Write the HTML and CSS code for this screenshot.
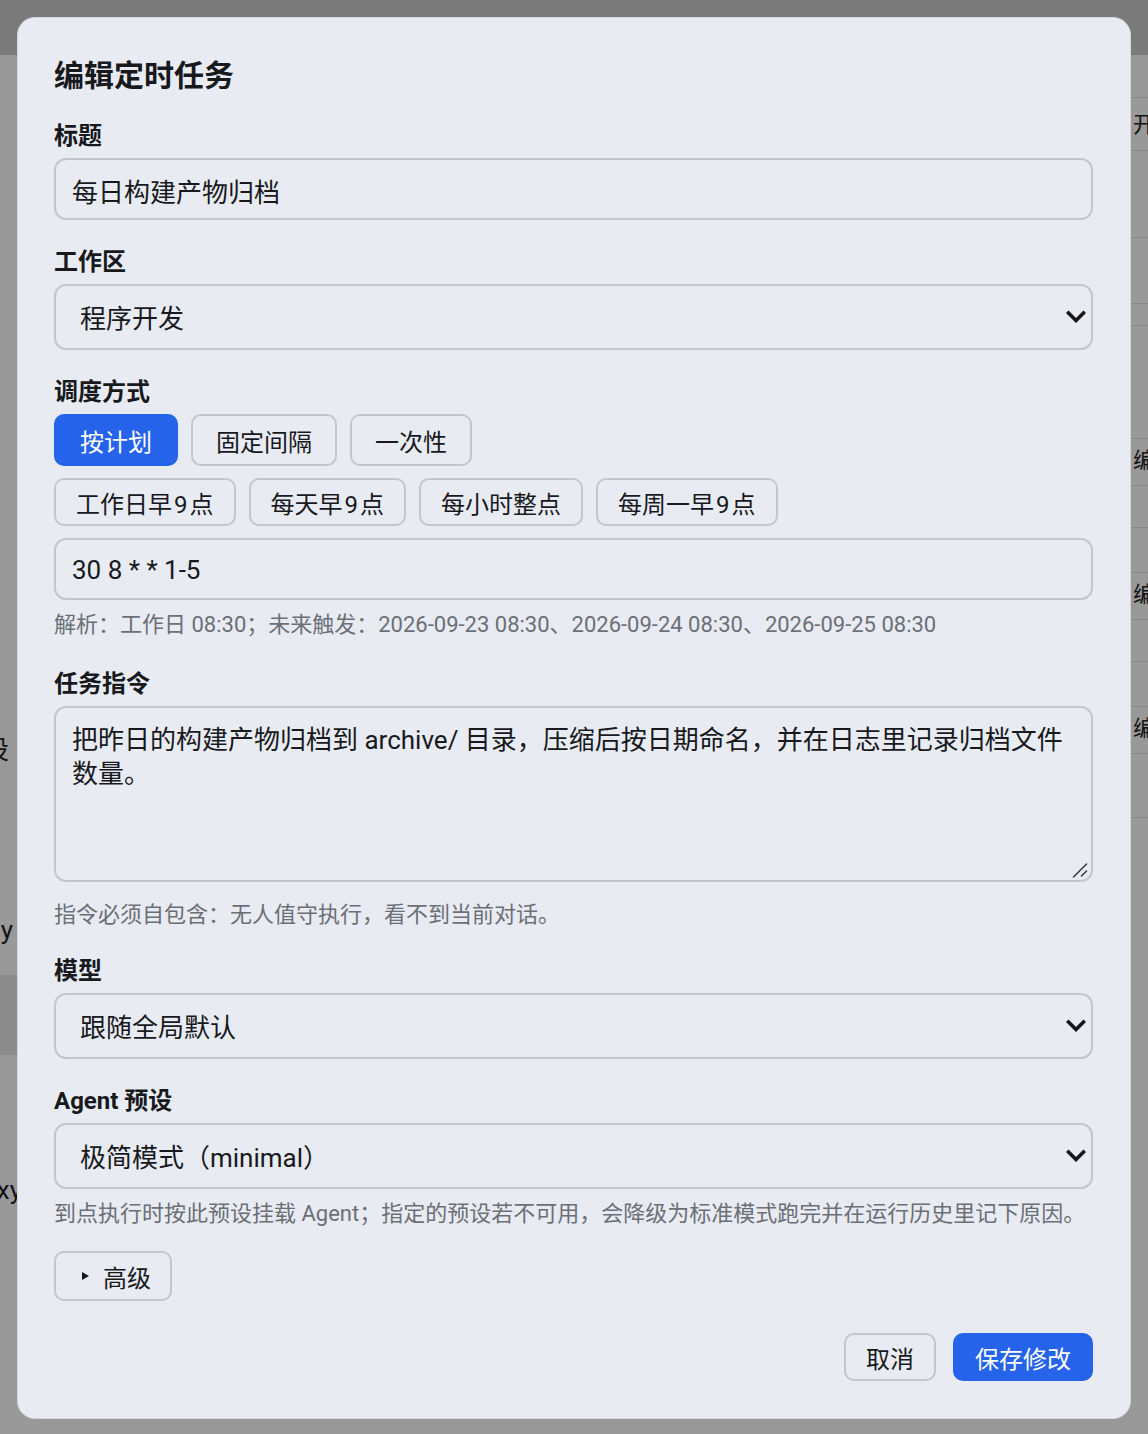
FILE: index.html
```html
<!DOCTYPE html>
<html lang="zh-CN">
<head>
<meta charset="utf-8">
<title>编辑定时任务</title>
<link rel="stylesheet" href="styles.css">
</head>
<body>
<div class="app">
  <header class="topbar"></header>
  <div class="workspace">
    <aside class="sidebar">
      <div class="side-item side-item-preset">Agent 预设</div>
      <div class="side-item side-item-key">Key y</div>
      <div class="side-item side-item-active"></div>
      <div class="side-item side-item-proxy">Proxy (</div>
    </aside>
    <main class="main"></main>
    <section class="tasks">
      <div class="task-row row-head">开启</div>
      <div class="task-row row-gap-lg"></div>
      <div class="task-row row-mid"></div>
      <div class="task-row row-thin"></div>
      <div class="task-row row-gap-xl"></div>
      <div class="task-row row-item">编辑</div>
      <div class="task-row row-sub"></div>
      <div class="task-row row-sep"></div>
      <div class="task-row row-item">编辑</div>
      <div class="task-row row-sub"></div>
      <div class="task-row row-sep"></div>
      <div class="task-row row-item">编辑</div>
      <div class="task-row row-tail"></div>
      <div class="task-row row-thin"></div>
    </section>
  </div>
</div>

<div class="backdrop"></div>

<div class="dialog" role="dialog" aria-labelledby="dlg-title">
  <h2 class="dialog-title" id="dlg-title">编辑定时任务</h2>

  <div class="field">
    <label class="field-label" for="f-title">标题</label>
    <input class="text-input" id="f-title" type="text" value="每日构建产物归档">
  </div>

  <div class="field">
    <label class="field-label" for="f-ws">工作区</label>
    <div class="select-wrap">
      <select class="select" id="f-ws">
        <option>程序开发</option>
      </select>
      <svg class="chevron" width="20" height="14" viewBox="0 0 20 14"><path d="M2.5 3 L10 10.5 L17.5 3" fill="none" stroke="#15171b" stroke-width="3.6" stroke-linecap="square"/></svg>
    </div>
  </div>

  <div class="field">
    <span class="field-label">调度方式</span>
    <div class="seg-row">
      <button class="seg seg-active" type="button">按计划</button>
      <button class="seg" type="button">固定间隔</button>
      <button class="seg" type="button">一次性</button>
    </div>
    <div class="chip-row">
      <button class="chip" type="button">工作日早<span class="num">9</span>点</button>
      <button class="chip" type="button">每天早<span class="num">9</span>点</button>
      <button class="chip" type="button">每小时整点</button>
      <button class="chip" type="button">每周一早<span class="num">9</span>点</button>
    </div>
    <input class="text-input cron-input" type="text" value="30 8 * * 1-5">
    <p class="hint">解析：工作日 08:30；未来触发：2026-09-23 08:30、2026-09-24 08:30、2026-09-25 08:30</p>
  </div>

  <div class="field field-after-hint">
    <label class="field-label" for="f-prompt">任务指令</label>
    <div class="textarea-wrap">
      <textarea class="textarea" id="f-prompt">把昨日的构建产物归档到 archive/ 目录，压缩后按日期命名，并在日志里记录归档文件数量。</textarea>
      <svg class="grip" width="16" height="16" viewBox="0 0 16 16"><path d="M1.5 15 L14.5 2 M9.5 14 L14.5 9" fill="none" stroke="#3c3f45" stroke-width="1.6" stroke-linecap="round"/></svg>
    </div>
    <p class="hint hint-loose">指令必须自包含：无人值守执行，看不到当前对话。</p>
  </div>

  <div class="field">
    <label class="field-label" for="f-model">模型</label>
    <div class="select-wrap">
      <select class="select" id="f-model">
        <option>跟随全局默认</option>
      </select>
      <svg class="chevron" width="20" height="14" viewBox="0 0 20 14"><path d="M2.5 3 L10 10.5 L17.5 3" fill="none" stroke="#15171b" stroke-width="3.6" stroke-linecap="square"/></svg>
    </div>
  </div>

  <div class="field">
    <label class="field-label" for="f-agent">Agent 预设</label>
    <div class="select-wrap">
      <select class="select" id="f-agent">
        <option>极简模式（minimal）</option>
      </select>
      <svg class="chevron" width="20" height="14" viewBox="0 0 20 14"><path d="M2.5 3 L10 10.5 L17.5 3" fill="none" stroke="#15171b" stroke-width="3.6" stroke-linecap="square"/></svg>
    </div>
    <p class="hint">到点执行时按此预设挂载 Agent；指定的预设若不可用，会降级为标准模式跑完并在运行历史里记下原因。</p>
  </div>

  <button class="advanced" type="button">
    <svg class="caret" width="7" height="8" viewBox="0 0 7 8"><path d="M0 0 L7 4 L0 8 Z" fill="#15171b"/></svg>
    <span>高级</span>
  </button>

  <div class="dialog-actions">
    <button class="btn" type="button">取消</button>
    <button class="btn btn-primary" type="button">保存修改</button>
  </div>
</div>
</body>
</html>
```

FILE: styles.css
```css
* {
  box-sizing: border-box;
}

html,
body {
  margin: 0;
  width: 1148px;
  height: 1434px;
  overflow: hidden;
}

body {
  font-family: Roboto, "Noto Sans CJK SC", sans-serif;
  color: #17191d;
  background: #ffffff;
}

/* ---------- page underneath the dialog ---------- */

.app {
  display: flex;
  flex-direction: column;
  height: 1434px;
}

.topbar {
  height: 55px;
  flex: none;
  background: #cdcdcd;
}

.workspace {
  flex: 1;
  display: flex;
  background: #ffffff;
}

.sidebar {
  width: 24px;
  flex: none;
  display: flex;
  flex-direction: column;
  overflow: hidden;
}

.side-item {
  direction: rtl;
  white-space: nowrap;
  overflow: hidden;
  font-size: 26px;
  line-height: 32px;
  color: #222;
}

.side-item-preset {
  margin-top: 679px;
  padding-right: 15px;
}

.side-item-key {
  margin-top: 148px;
  padding-right: 11px;
}

.side-item-active {
  margin-top: 29px;
  height: 80px;
  width: 17px;
  background: #e9e9ec;
}

.side-item-proxy {
  margin-top: 119px;
  padding-right: 2px;
}

.main {
  flex: 1;
}

.tasks {
  width: 17px;
  flex: none;
  padding-top: 42px;
  overflow: hidden;
  white-space: nowrap;
}

.task-row {
  border-top: 1px solid #e2e2e2;
  padding-left: 2px;
  font-size: 22px;
  line-height: 44px;
  color: #222;
}

.row-head { height: 53px; line-height: 54px; }
.row-gap-lg { height: 87px; }
.row-mid { height: 66px; }
.row-thin { height: 22px; }
.row-gap-xl { height: 113px; }
.row-item { height: 47px; }
.row-sub { height: 42px; }
.row-sep { height: 45px; }
.row-tail { height: 64px; }

.backdrop {
  position: fixed;
  inset: 0;
  background: rgba(0, 0, 0, 0.4);
}

/* ---------- dialog ---------- */

.dialog {
  position: fixed;
  left: 17px;
  top: 17px;
  width: 1114px;
  height: 1402px;
  padding: 40px 37px 0 36px;
  background: #e8ebf2;
  border: 1px solid #d3d6dc;
  border-radius: 18px;
}

.dialog-title {
  margin: 0;
  font-size: 30px;
  line-height: 36px;
  font-weight: 700;
}

.field {
  margin-top: 27px;
}

.field-after-hint {
  margin-top: 30px;
}

.field-label {
  display: block;
  margin-bottom: 7px;
  font-size: 24px;
  line-height: 30px;
  font-weight: 700;
}

.text-input {
  display: block;
  width: 100%;
  height: 62px;
  padding: 2px 16px 0;
  border: 2px solid #c4c6cb;
  border-radius: 12px;
  background: transparent;
  font: inherit;
  font-size: 26px;
  color: #17191d;
  outline: none;
}

.select-wrap,
.textarea-wrap {
  position: relative;
}

.select {
  display: block;
  width: 100%;
  height: 66px;
  padding: 3px 52px 0 24px;
  border: 2px solid #c4c6cb;
  border-radius: 12px;
  background: transparent;
  font: inherit;
  font-size: 26px;
  color: #17191d;
  appearance: none;
  -webkit-appearance: none;
  outline: none;
}

.chevron {
  position: absolute;
  right: 7px;
  top: 26px;
  pointer-events: none;
}

.seg-row,
.chip-row {
  display: flex;
  gap: 13px;
}

.seg,
.chip,
.btn,
.advanced {
  border: 2px solid #c4c6cb;
  border-radius: 10px;
  background: transparent;
  font: inherit;
  font-size: 24px;
  color: #17191d;
  cursor: pointer;
}

.seg {
  height: 52px;
  padding: 0 23px;
}

.seg-active {
  padding: 0 24px;
  background: #2563eb;
  border-color: #2563eb;
  color: #ffffff;
}

.chip-row {
  margin-top: 12px;
}

.chip {
  height: 48px;
  padding: 0 20px;
}

.num {
  margin: 0 2px;
}

.cron-input {
  margin-top: 12px;
}

.hint {
  margin: 11px 0 0;
  font-size: 22px;
  line-height: 28px;
  color: #6b6f76;
}

.hint-loose {
  margin-top: 19px;
}

.textarea {
  display: block;
  width: 100%;
  height: 176px;
  padding: 15px 16px 13px;
  border: 2px solid #c4c6cb;
  border-radius: 12px;
  background: transparent;
  font: inherit;
  font-size: 26px;
  line-height: 34px;
  color: #17191d;
  resize: vertical;
  outline: none;
}

/* custom-drawn resize grip */
.textarea::-webkit-resizer {
  background: transparent;
}

.grip {
  position: absolute;
  right: 5px;
  bottom: 4px;
  pointer-events: none;
}

.advanced {
  margin-top: 23px;
  height: 50px;
  padding: 0 19px 0 26px;
  display: inline-flex;
  align-items: center;
  gap: 14px;
}

.dialog-actions {
  margin-top: 32px;
  display: flex;
  justify-content: flex-end;
  gap: 17px;
}

.btn {
  height: 48px;
  padding: 0 20px;
}

.btn-primary {
  background: #2563eb;
  border-color: #2563eb;
  color: #ffffff;
}
```
